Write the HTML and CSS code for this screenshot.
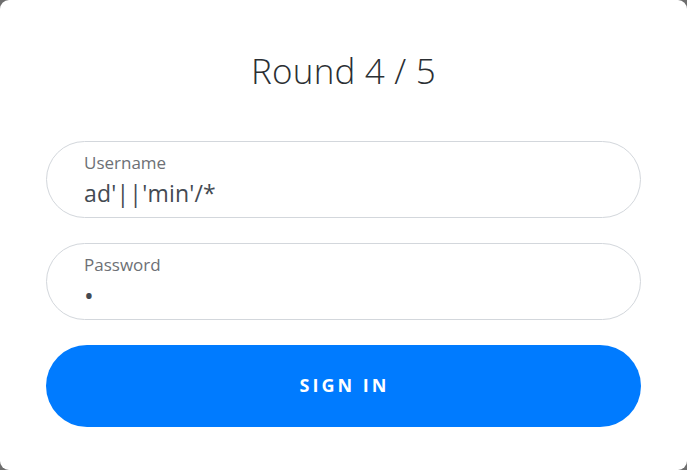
FILE: index.html
```html
<!DOCTYPE html>
<html>
<head>
<meta charset="utf-8">
<link rel="stylesheet" href="styles.css">
</head>
<body>
<div class="card">
  <h1 class="title">Round 4 / 5</h1>
  <form class="form">
    <div class="field">
      <span class="label">Username</span>
      <span class="value">ad'||'min'/*</span>
    </div>
    <div class="field">
      <span class="label">Password</span>
      <span class="value dots">•</span>
    </div>
    <button type="button" class="btn">SIGN IN</button>
  </form>
</div>
</body>
</html>
```
FILE: styles.css
```css
html, body {
  margin: 0;
  padding: 0;
  background: #6e6e6e;
}
body {
  width: 687px;
  height: 470px;
  overflow: hidden;
}
.card {
  box-sizing: border-box;
  width: 687px;
  height: 470px;
  background: #ffffff;
  border-radius: 9px;
  padding: 48px 46px 0;
  font-family: "Open Sans", "Noto Sans", sans-serif;
}
.title {
  margin: 0;
  text-align: center;
  font-weight: 300;
  font-size: 35px;
  line-height: 46px;
  color: #2b2f33;
  letter-spacing: 0.2px;
}
.form {
  margin-top: 47px;
  display: flex;
  flex-direction: column;
  gap: 25px;
}
.field {
  box-sizing: border-box;
  height: 77px;
  border: 1px solid #d3d7dc;
  border-radius: 40px;
  padding: 10px 37px 0;
  display: flex;
  flex-direction: column;
}
.label {
  font-size: 17px;
  line-height: 22px;
  color: #6d7075;
}
.value {
  margin-top: 4px;
  font-size: 23px;
  line-height: 30px;
  color: #444a52;
  letter-spacing: 0.2px;
}
.dots {
  margin-top: 4px;
  font-size: 26px;
  line-height: 30px;
}
.btn {
  height: 82px;
  border: none;
  border-radius: 41px;
  background: #007bff;
  color: #ffffff;
  font-family: "Open Sans", "Noto Sans", sans-serif;
  font-weight: 700;
  font-size: 18px;
  letter-spacing: 3px;
  padding: 0 0 2px 2px;
}
```
